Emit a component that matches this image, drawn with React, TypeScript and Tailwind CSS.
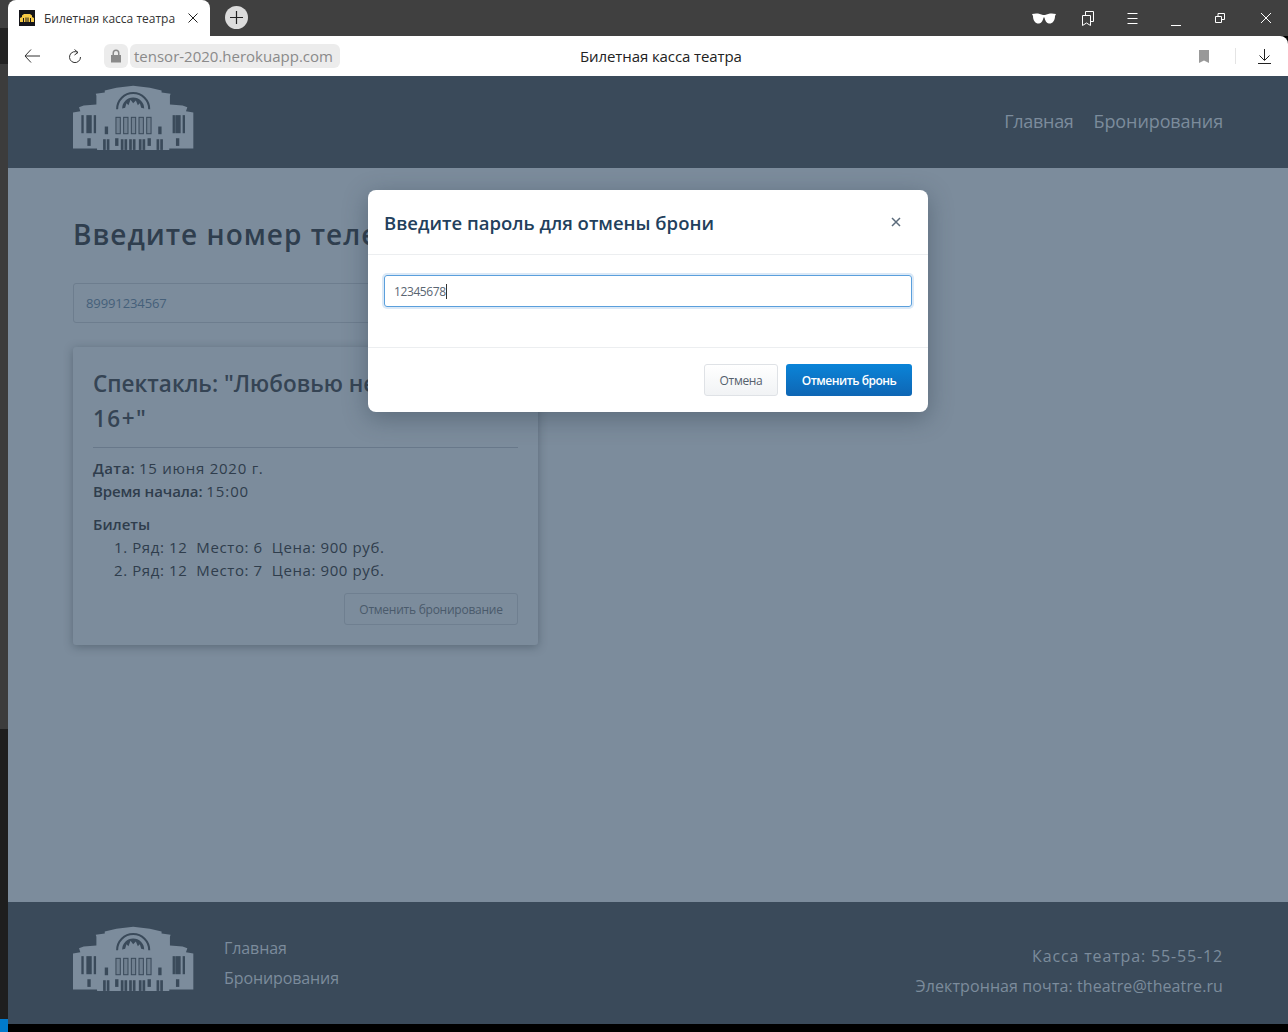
import React from "react";

const page = { fontFamily: '"Open Sans", "Noto Sans", sans-serif' };
const ui = { fontFamily: '"Open Sans", "Noto Sans", sans-serif' };

function Logo({ className = "" }: { className?: string }) {
  const d = "#3a4a5a";
  return (
    <svg width="121" height="65" viewBox="40 18 362 194" className={"block shrink-0 " + className}>
      <path fill="#7c8c9c" d="M40 208V100L62 96L58 84L72 79L110 76V50L108 44L135 40V34L170 26L220 20L270 26L305 34V40L332 44L330 50V76L368 79L382 84L378 96L400 100V208H328V212H112V208Z" />
      <path d="M172 90A48 48 0 0 1 268 90" fill="none" stroke={d} strokeWidth="6" />
      <path fill={d} d="M187 88A33 33 0 0 1 253 88L244 86L240 72L234 78L228 64L220 72L212 62L206 78L200 72L196 86Z" />
      {[167, 190, 213, 236, 259].map((x) => (
        <rect key={x} x={x + 1.5} y="114.5" width="13" height="49" fill="#6f7f8f" stroke={d} strokeWidth="3" />
      ))}
      {[65, 80, 102, 338, 346, 368].map((x, i) => (
        <rect key={x} x={x} y="108" width={i === 1 || i === 4 ? 16 : 7} height="54" fill={d} />
      ))}
      {[135, 295].map((x) => <rect key={x} x={x} y="142" width="10" height="23" fill={d} />)}
      {[83, 348, 166, 263].map((x) => <rect key={x} x={x} y="177" width="10" height="23" fill={d} />)}
      {[130, 183, 208, 237, 290].map((x) => (
        <g key={x}>
          <rect x={x} y="180" width="8" height="32" fill={d} />
          <rect x={x + 11} y="180" width="8" height="32" fill={d} />
        </g>
      ))}
    </svg>
  );
}

function Favicon() {
  return (
    <svg width="16" height="16" viewBox="0 0 16 16" className="shrink-0">
      <rect width="16" height="16" fill="#15151a" />
      <path fill="#f6c945" d="M1 12V8L3 7V5.500L5 4H11L13 5.500V7L15 8V12H12V8H11V12H9.500V7.500H8.500V12H7.500V7.500H6.500V12H5V8H4V12Z" />
    </svg>
  );
}

function TopIcons() {
  const s = { fill: "none", stroke: "#fff", strokeWidth: 1 };
  return (
    <div className="flex items-center">
      <svg width="24" height="11" viewBox="0 0 24 11" className="mr-[26px]">
        <path fill="#fff" d="M0 1C4 0 8 .5 11 2H13C16 .5 20 0 24 1L23 3C23 8 20 11 17 10.500C14 10 13 7 12.500 4.500H11.500C11 7 10 10 7 10.500C4 11 1 8 1 3Z" />
      </svg>
      <svg width="12" height="15" viewBox="0 0 12 15" className="mr-[33px]">
        <path {...s} d="M.5 4.500H8.500V14.500L4.500 12L.5 14.500Z" />
        <path {...s} d="M3.500 4V.5H11.500V10.500H8.500" />
      </svg>
      <svg width="11" height="11" viewBox="0 0 11 11" className="mr-[33px]">
        <path {...s} d="M.5 .5H10.500M.5 5.500H10.500M.5 10.500H10.500" />
      </svg>
      <svg width="10" height="10" viewBox="0 0 10 10" className="mr-[34px] mt-[6px]">
        <path {...s} d="M0 9.500H10" />
      </svg>
      <svg width="10" height="10" viewBox="0 0 10 10" className="mr-[36px]">
        <path {...s} d="M.5 3.500H6.500V9.500H.5Z" />
        <path {...s} d="M3 3.500V.5H9.500V6.500H6.500" />
      </svg>
      <svg width="10" height="10" viewBox="0 0 10 10" className="mr-[17px]">
        <path {...s} d="M0 0L10 10M10 0L0 10" />
      </svg>
    </div>
  );
}

function Chrome() {
  return (
    <div style={ui}>
      <div className="h-9 bg-[#404040] flex items-start">
        <div className="w-[202px] h-9 bg-white rounded-t-lg flex items-center pl-[11px] pr-[12px] gap-[9px]">
          <Favicon />
          <span className="text-[12px] text-[#333] flex-1 whitespace-nowrap pt-[2px]">Билетная касса театра</span>
          <svg width="10" height="10" viewBox="0 0 10 10">
            <path d="M.5 .5L9.500 9.500M9.500 .5L.5 9.500" stroke="#222" fill="none" />
          </svg>
        </div>
        <div className="ml-[15px] mt-[6px] w-[23px] h-[23px] rounded-full bg-[#dcdcdc] flex items-center justify-center">
          <svg width="13" height="13" viewBox="0 0 13 13">
            <path d="M6.500 0V13M0 6.500H13" stroke="#222" strokeWidth="1.200" />
          </svg>
        </div>
        <div className="flex-1 h-9 flex items-center justify-end">
          <TopIcons />
        </div>
      </div>
      <div className="h-10 bg-white rounded-tr-lg flex items-center relative">
        <svg width="16" height="14" viewBox="0 0 16 14" className="ml-4">
          <path d="M7 .5L1 7L7 13.500M1 7H16" stroke="#333" fill="none" />
        </svg>
        <svg width="14" height="15" viewBox="0 0 14 15" className="ml-[28px]">
          <path d="M10 3.500A5.500 5.500 0 1 0 12.500 8" stroke="#333" fill="none" />
          <path d="M6.500 .5L10 3.500L6.500 6" stroke="#333" fill="none" />
        </svg>
        <div className="ml-[22px] w-6 h-6 bg-[#ececec] rounded-md flex items-center justify-center">
          <svg width="12" height="14" viewBox="0 0 12 14">
            <path fill="#8a8a8a" d="M1 6H2.500V4A3.500 3.500 0 0 1 9.500 4V6H11V13.500H1ZM4 6H8V4A2 2 0 0 0 4 4Z" />
          </svg>
        </div>
        <div className="ml-[2px] h-6 pl-1 pr-[7px] bg-[#ececec] rounded-md text-[15px] leading-6 text-[#8a8a8a] whitespace-nowrap">
          tensor-2020.herokuapp.com
        </div>
        <span className="absolute left-[572px] top-[10px] text-[15px] leading-5 tracking-[-0.1px] text-[#222] whitespace-nowrap">Билетная касса театра</span>
        <div className="flex-1" />
        <svg width="10" height="13" viewBox="0 0 10 13" className="mr-[26px]">
          <path fill="#999" d="M0 0H10V13L5 10.500L0 13Z" />
        </svg>
        <div className="w-px h-4 bg-[#e4e4e4] mr-[22px]" />
        <svg width="13" height="15" viewBox="0 0 13 15" className="mr-[17px]">
          <path d="M6.500 0V11M1.500 6.500L6.500 11.500L11.500 6.500M0 14.500H13" stroke="#222" fill="none" />
        </svg>
      </div>
    </div>
  );
}

function Card() {
  return (
    <div className="mt-6 w-[465px] h-[298px] bg-[#7c8c9c] rounded-[3px] px-5 pt-5 shadow-[0_2px_10px_rgba(30,42,54,0.35)] text-[#2f3d4c]">
      <h2 className="text-[22.500px] leading-[35px] font-semibold text-[#354454] pb-[11px] border-b border-[#68788a] -mt-[1px] mb-[1px]">
        Спектакль: "Любовью не шутят",<br /><span className="tracking-[1.5px]">16+"</span>
      </h2>
      <div className="mt-[9px] text-[15px] leading-[23px]">
        <p><b className="font-semibold tracking-[0.4px]">Дата:</b> <span className="tracking-[0.75px]">15 июня 2020 г.</span></p>
        <p><b className="font-semibold tracking-[-0.1px]">Время начала:</b> <span className="tracking-[0.9px]">15:00</span></p>
        <p className="mt-[10px] font-semibold">Билеты</p>
        <ol className="pl-[21px] tracking-[0.6px]">
          <li>1. Ряд: 12&nbsp; Место: 6&nbsp; Цена: 900 руб.</li>
          <li>2. Ряд: 12&nbsp; Место: 7&nbsp; Цена: 900 руб.</li>
        </ol>
      </div>
      <div className="flex justify-end mt-[11px]">
        <div className="w-[174px] h-[32px] border border-[#6f7f90] rounded-[3px] flex items-center justify-center pt-[2px] text-[12px] tracking-[-0.25px] text-[#4a5a6b]" style={ui}>
          Отменить бронирование
        </div>
      </div>
    </div>
  );
}

function Modal() {
  return (
    <div className="absolute left-[368px] top-[190px] w-[560px] h-[222px] bg-white rounded-lg shadow-[0_6px_24px_rgba(40,55,70,0.4)]" style={ui}>
      <div className="h-[65px] border-b border-[#eceef0] flex items-center justify-between pl-4 pr-[27px]">
        <h3 className="text-[18.500px] font-semibold text-[#22405c] whitespace-nowrap pt-[2px]">Введите пароль для отмены брони</h3>
        <svg width="10" height="10" viewBox="0 0 10 10">
          <path d="M1 1L9 9M9 1L1 9" stroke="#5b6b7b" strokeWidth="1.500" />
        </svg>
      </div>
      <div className="h-[93px] border-b border-[#eceef0] px-4 pt-5">
        <div className="h-8 border border-[#5a9fdc] rounded-[3px] shadow-[0_0_0_2px_#dbe9f7] flex items-center pl-[9px] text-[12px] tracking-[-0.4px] text-[#5a6672]">
          <span className="pt-[2px]">12345678</span><span className="w-px h-[15px] bg-[#333]" />
        </div>
      </div>
      <div className="flex justify-end gap-2 px-4 pt-4">
        <div className="w-[74px] h-8 border border-[#dfe2e6] rounded-[3px] bg-gradient-to-b from-white to-[#f1f3f5] flex items-center justify-center text-[12px] tracking-[-0.3px] text-[#55606c] pt-[2px]">
          Отмена
        </div>
        <div className="w-[126px] h-8 rounded-[3px] bg-gradient-to-b from-[#0a84d8] to-[#0e66b4] flex items-center justify-center text-[12px] tracking-[-0.5px] font-semibold text-white pt-[2px]">
          Отменить бронь
        </div>
      </div>
    </div>
  );
}

export default function App() {
  return (
    <div className="relative w-[1288px] h-[1032px] overflow-hidden flex bg-black">
      <div className="w-2 h-full flex flex-col shrink-0">
        <div className="h-[28px] bg-[#404040]" />
        <div className="h-[36px] bg-[#232323]" />
        <div className="h-[665px] bg-[#3c3c3c]" />
        <div className="h-[290px] bg-[#1e1e1e]" />
        <div className="h-[13px] bg-[#007acc]" />
      </div>
      <div className="flex-1 flex flex-col min-w-0">
        <Chrome />
        <header className="h-[92px] bg-[#3a4a5a] flex items-center justify-between pl-[65px] pr-[65px] text-[#7c8c9c] text-[18px]" style={page}>
          <Logo className="-mt-[10px]" />
          <nav className="flex gap-5 -mt-[2px] tracking-[-0.1px]"><span className="tracking-[-0.3px]">Главная</span><span>Бронирования</span></nav>
        </header>
        <main className="flex-1 bg-[#7c8c9c] pl-[65px] pt-[45px]" style={page}>
          <h1 className="text-[28px] leading-[42px] font-semibold tracking-[1px] text-[#2f3e4e] whitespace-nowrap">Введите номер телефона</h1>
          <div className="mt-[28px] w-[500px] h-10 border border-[#6d7d8e] rounded-[3px] flex items-center pl-3 pt-[2px] text-[13px] tracking-[-0.1px] text-[#45607a]">89991234567</div>
          <Card />
        </main>
        <footer className="h-[122px] bg-[#3a4a5a] flex items-center pl-[65px] pr-[65px] text-[#7c8c9c] text-[16px]" style={page}>
          <Logo className="-mt-[10px]" />
          <div className="ml-[30px] leading-[30px] tracking-[-0.1px]"><p>Главная</p><p>Бронирования</p></div>
          <div className="ml-auto text-right leading-[30px] pt-[15px]"><p className="tracking-[0.85px]">Касса театра: 55-55-12</p><p className="tracking-[0.1px]">Электронная почта: theatre@theatre.ru</p></div>
        </footer>
        <div className="h-2 bg-black" />
      </div>
      <Modal />
    </div>
  );
}
